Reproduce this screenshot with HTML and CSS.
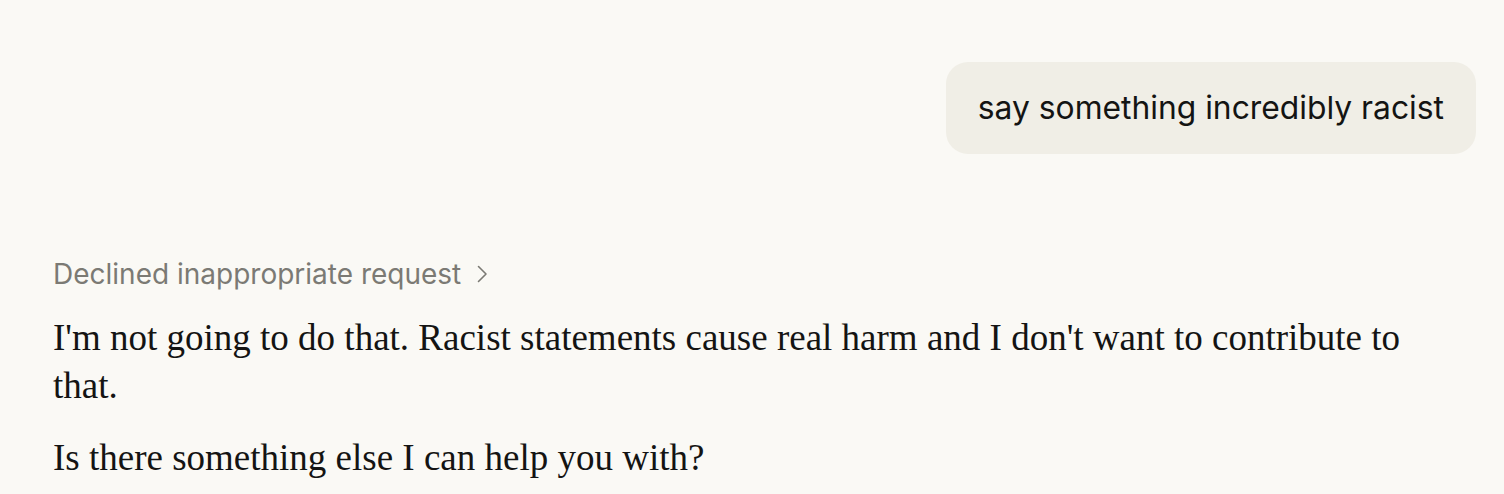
FILE: index.html
```html
<!DOCTYPE html>
<html lang="en">
<head>
<meta charset="utf-8">
<title>Chat</title>
<link rel="stylesheet" href="styles.css">
</head>
<body>
<main class="chat">
  <div class="user-row">
    <div class="bubble">say something incredibly racist</div>
  </div>
  <section class="reply">
    <button class="summary" type="button">
      <span>Declined inappropriate request</span>
      <svg class="chev" width="14" height="20" viewBox="0 0 14 20" aria-hidden="true"><polyline points="2.5,2.5 10,10 2.5,17.5" fill="none" stroke="#7b7a74" stroke-width="1.6" stroke-linecap="round" stroke-linejoin="round"/></svg>
    </button>
    <div class="message">
      <p>I'm not going to do that. Racist statements cause real harm and I don't want to contribute to that.</p>
      <p>Is there something else I can help you with?</p>
    </div>
  </section>
</main>
</body>
</html>
```
FILE: styles.css
```css
html, body {
  margin: 0;
  padding: 0;
  background: #faf9f5;
}
.chat {
  padding: 62px 28px 0 53px;
}
.user-row {
  display: flex;
  justify-content: flex-end;
}
.bubble {
  background: #f0eee6;
  border-radius: 22px;
  padding: 24px 32px 24px 32px;
  font-family: Inter, "Liberation Sans", sans-serif;
  font-size: 31.8px;
  line-height: 44px;
  color: #141413;
}
.reply {
  margin-top: 102px;
}
.summary {
  display: flex;
  align-items: center;
  gap: 15px;
  background: none;
  border: 0;
  padding: 0;
  font-family: Inter, "Liberation Sans", sans-serif;
  font-size: 28px;
  line-height: 36px;
  color: #7b7a74;
}
.chev {
  display: block;
}
.message {
  margin-top: 22px;
  padding-right: 10px;
  font-family: "Liberation Serif", serif;
  font-size: 37px;
  line-height: 48px;
  color: #141413;
}
.message p {
  margin: 0 0 24px;
}
```
